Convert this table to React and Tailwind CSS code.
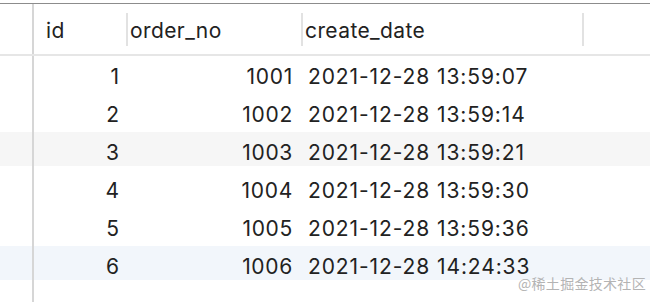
export default function App() {
  const rows = [
    { id: 1, no: 1001, d: "2021-12-28 13:59:07", bg: "" },
    { id: 2, no: 1002, d: "2021-12-28 13:59:14", bg: "" },
    { id: 3, no: 1003, d: "2021-12-28 13:59:21", bg: "bg-[#f6f6f6]" },
    { id: 4, no: 1004, d: "2021-12-28 13:59:30", bg: "" },
    { id: 5, no: 1005, d: "2021-12-28 13:59:36", bg: "" },
    { id: 6, no: 1006, d: "2021-12-28 14:24:33", bg: "bg-[#f2f6fb]" },
  ];
  return (
    <div className="relative w-[650px] h-[302px] overflow-hidden bg-white text-[#222] font-['Inter','Liberation_Sans',sans-serif] text-[21px] leading-none">
      <div className="h-[3px] bg-white" />
      <div className="h-px bg-[#8c8c8c]" />
      {/* header */}
      <div className="flex h-[52px] border-b-2 border-[#e6e6e6]">
        <div className="w-[34px] border-r-2 border-[#d6d6d6]" />
        <div className="w-[92px] flex items-center pl-[12px] pt-[2px] tracking-[0.4px]">id</div>
        <div className="w-[2px] h-[33px] self-center bg-[#e2e2e2]" />
        <div className="w-[173px] flex items-center pl-[2px] pt-[2px] tracking-[0.4px]">order_no</div>
        <div className="w-[2px] h-[33px] self-center bg-[#e2e2e2]" />
        <div className="w-[279px] flex items-center pl-[2px] pt-[2px] tracking-[0.4px]">create_date</div>
        <div className="w-[2px] h-[33px] self-center bg-[#e2e2e2]" />
        <div className="flex-1" />
      </div>
      {rows.map((r) => (
        <div key={r.id} className="h-[38px]">
          <div className={`flex h-[34px] ${r.bg}`}>
            <div className="w-[34px] h-[38px] border-r-2 border-[#d6d6d6] shrink-0" />
            <div className="w-[92px] flex items-center justify-end pr-[7px] pt-[6px]">{r.id}</div>
            <div className="w-[175px] flex items-center justify-end pr-[8px] pt-[6px] tracking-[0.7px]">{r.no}</div>
            <div className="flex-1 flex items-center pl-[7px] pt-[6px] tracking-[0.9px]">{r.d}</div>
          </div>
        </div>
      ))}
      <div className="flex h-[40px]">
        <div className="w-[34px] h-full border-r-2 border-[#d6d6d6]" />
      </div>
      <div className="absolute left-[518px] top-[273px] text-[14px] leading-normal text-[#b4b4b4] font-['Noto_Sans_CJK_SC',sans-serif] tracking-[0.3px]">
        @稀土掘金技术社区
      </div>
    </div>
  );
}
